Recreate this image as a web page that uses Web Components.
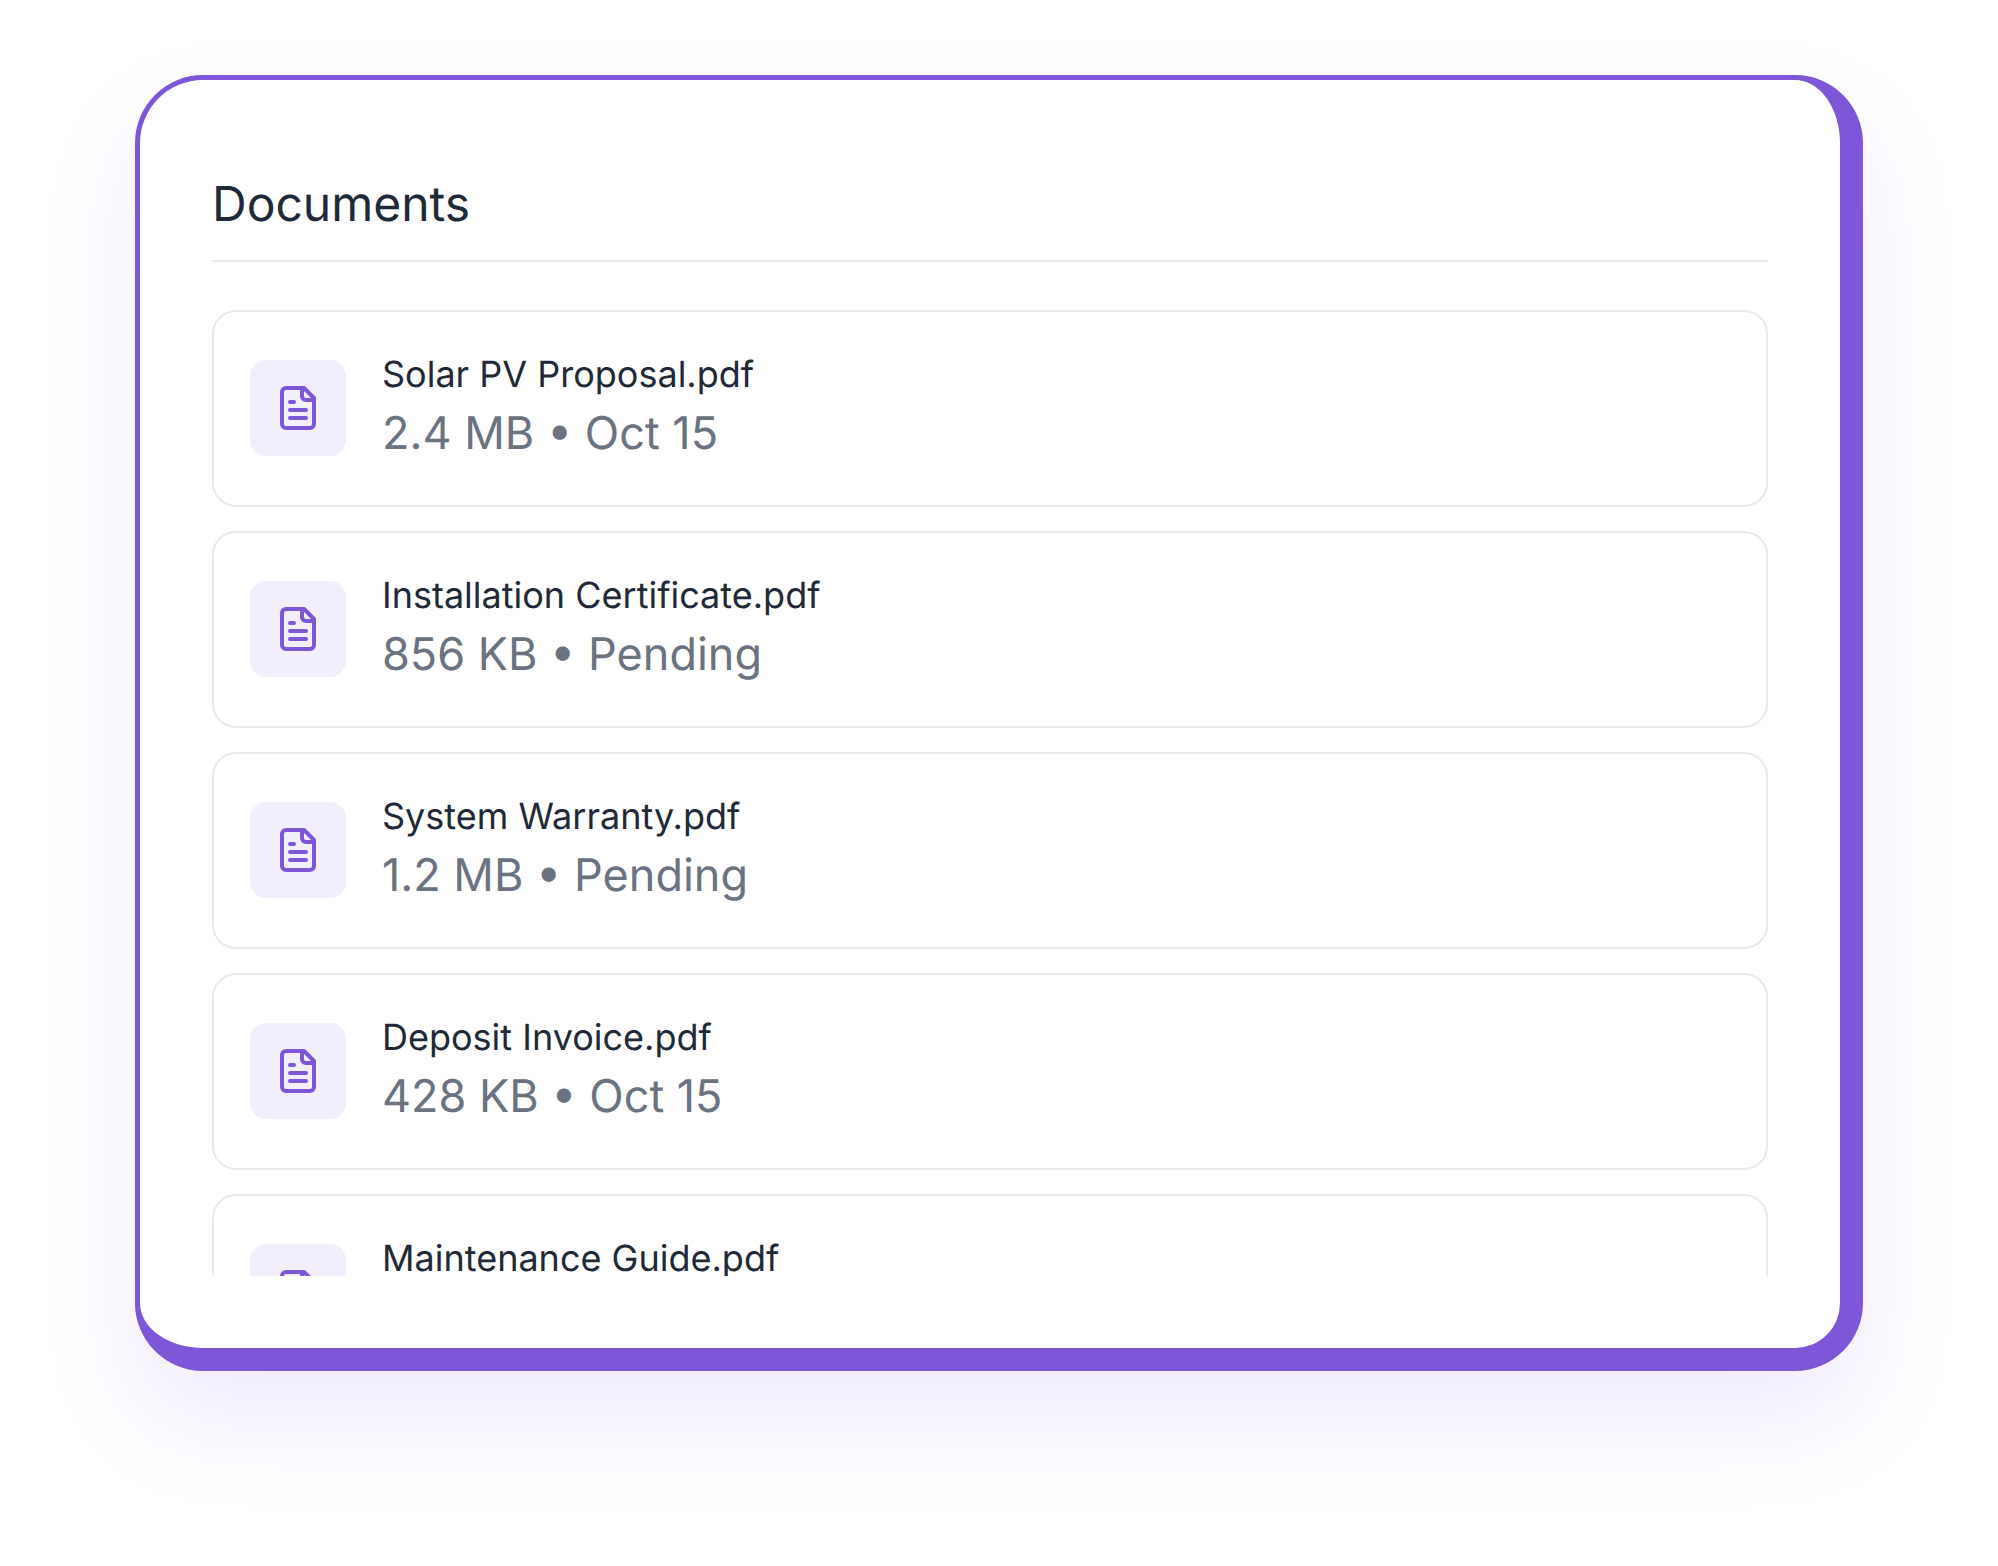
<!DOCTYPE html>
<html>
<head>
<meta charset="utf-8">
<title>Documents</title>
<style>
  html, body { margin: 0; background: #fff; }
  body { font-family: "Inter", "Liberation Sans", sans-serif; text-rendering: geometricPrecision; }
</style>
</head>
<body>
<docs-page>
  <docs-panel heading="Documents">
    <doc-row name="Solar PV Proposal.pdf" meta="2.4 MB • Oct 15"></doc-row>
    <doc-row name="Installation Certificate.pdf" meta="856 KB • Pending"></doc-row>
    <doc-row name="System Warranty.pdf" meta="1.2 MB • Pending"></doc-row>
    <doc-row name="Deposit Invoice.pdf" meta="428 KB • Oct 15"></doc-row>
    <doc-row name="Maintenance Guide.pdf" meta="3.1 MB • Oct 15"></doc-row>
  </docs-panel>
</docs-page>

<template id="tpl-page">
  <style>
    :host {
      display: flex;
      justify-content: center;
      align-items: flex-start;
      box-sizing: border-box;
      width: 100%;
      height: 1566px;
      padding-top: 75px;
      overflow: hidden;
      background: #fff;
    }
  </style>
  <slot></slot>
</template>

<template id="tpl-panel">
  <style>
    :host {
      display: flex;
      flex-direction: column;
      box-sizing: border-box;
      width: 1728px;
      height: 1296px;
      padding: 95px 72px 72px 72px;
      background: #fff;
      border-style: solid;
      border-color: #7e57d9;
      border-width: 5px 23px 23px 5px;
      border-radius: 68px;
      box-shadow: 0 50px 100px rgba(130, 80, 240, 0.12);
    }
    h2 {
      margin: 0;
      padding-bottom: 27px;
      border-bottom: 2px solid #e9e9ee;
      font-size: 48px;
      line-height: 58px;
      font-weight: 380;
      font-variation-settings: "opsz" 24;
      color: #1f2937;
    }
    .list {
      flex: 1;
      min-height: 0;
      margin-top: 48px;
      display: flex;
      flex-direction: column;
      gap: 24px;
      overflow: hidden;
    }
  </style>
  <h2></h2>
  <div class="list"><slot></slot></div>
</template>

<template id="tpl-row">
  <style>
    :host {
      display: flex;
      flex: none;
      align-items: center;
      gap: 36px;
      box-sizing: border-box;
      height: 197px;
      padding: 0 36px;
      border: 2px solid #e9e9ee;
      border-radius: 24px;
      background: #fff;
    }
    .tile {
      flex: none;
      display: flex;
      align-items: center;
      justify-content: center;
      width: 96px;
      height: 96px;
      margin-bottom: 1px;
      border-radius: 16px;
      background: #f2eefc;
    }
    svg { display: block; }
    .name {
      font-size: 36px;
      line-height: 48px;
      font-weight: 380;
      font-variation-settings: "opsz" 18;
      color: #1f2937;
    }
    .meta {
      font-size: 45px;
      line-height: 69px;
      font-weight: 380;
      font-variation-settings: "opsz" 22;
      color: #6b7280;
    }
  </style>
  <div class="tile">
    <svg width="48" height="48" viewBox="0 0 24 24" fill="none" stroke="#7e57d9" stroke-width="2" stroke-linecap="round" stroke-linejoin="round">
      <path d="M15 2H6a2 2 0 0 0-2 2v16a2 2 0 0 0 2 2h12a2 2 0 0 0 2-2V7Z"/>
      <path d="M14 2v4a2 2 0 0 0 2 2h4"/>
      <path d="M10 9H8"/>
      <path d="M16 13H8"/>
      <path d="M16 17H8"/>
    </svg>
  </div>
  <div class="text">
    <div class="name"></div>
    <div class="meta"></div>
  </div>
</template>

<script>
class DocsPage extends HTMLElement {
  constructor() {
    super();
    const shadow = this.attachShadow({ mode: "open" });
    shadow.appendChild(document.getElementById("tpl-page").content.cloneNode(true));
  }
}

class DocsPanel extends HTMLElement {
  constructor() {
    super();
    const shadow = this.attachShadow({ mode: "open" });
    shadow.appendChild(document.getElementById("tpl-panel").content.cloneNode(true));
  }
  connectedCallback() {
    this.shadowRoot.querySelector("h2").textContent = this.getAttribute("heading");
  }
}

class DocRow extends HTMLElement {
  constructor() {
    super();
    const shadow = this.attachShadow({ mode: "open" });
    shadow.appendChild(document.getElementById("tpl-row").content.cloneNode(true));
  }
  connectedCallback() {
    this.shadowRoot.querySelector(".name").textContent = this.getAttribute("name");
    this.shadowRoot.querySelector(".meta").textContent = this.getAttribute("meta");
  }
}

customElements.define("docs-page", DocsPage);
customElements.define("docs-panel", DocsPanel);
customElements.define("doc-row", DocRow);
</script>
</body>
</html>
